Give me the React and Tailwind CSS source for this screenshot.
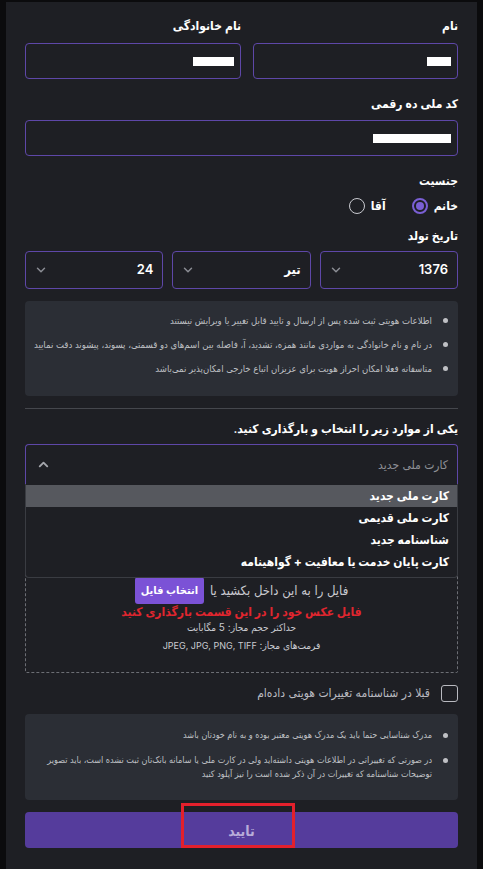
import { ChevronDown, ChevronUp } from "lucide-react";

const FONT = { fontFamily: 'Inter, "DejaVu Sans Condensed", "DejaVu Sans", sans-serif' };

function Label({ children, className = "" }) {
  return <p className={`h-5 text-[12px] font-semibold leading-5 text-white ${className}`}>{children}</p>;
}

function MaskedInput({ maskWidth }) {
  return (
    <div className="flex h-[36px] items-center rounded-[4px] border border-[#5e47a8] px-[6px]">
      <span className="h-[9px] bg-white" style={{ width: maskWidth }} />
    </div>
  );
}

function DateSelect({ value }) {
  return (
    <div className="flex h-[38px] flex-1 items-center justify-between rounded-[4px] border border-[#5e47a8] pl-[8px] pr-[9px]">
      <span className="text-[13px] font-semibold text-white">{value}</span>
      <ChevronDown size={14} strokeWidth={2.5} className="text-[#8b8d94]" />
    </div>
  );
}

function Bullets({ items, className = "" }) {
  return (
    <ul className={`flex flex-col rounded-[4px] bg-[#2b2e35] pl-[8px] pr-[10px] text-[#bfc0c4] ${className}`}>
      {items.map((t) => (
        <li key={t} className="flex gap-[11px]">
          <span className="mt-[5px] h-[5px] w-[5px] shrink-0 rounded-full bg-[#bfc0c4]" />
          <span>{t}</span>
        </li>
      ))}
    </ul>
  );
}

export default function App() {
  const options = ["کارت ملی جدید", "کارت ملی قدیمی", "شناسنامه جدید", "کارت پایان خدمت یا معافیت + گواهینامه"];

  return (
    <div dir="rtl" className="min-h-screen bg-[#0b0b0d] pt-[2px] pr-[6px]" style={FONT}>
      <div className="ml-auto mr-0 min-h-[867px] w-[471px] bg-[#1e1f24] px-[19px] pt-[14px]" dir="rtl">
        <div className="grid grid-cols-[205px_216px] gap-x-[12px]">
          <div>
            <Label>نام</Label>
            <div className="mt-[7px]"><MaskedInput maskWidth={24} /></div>
          </div>
          <div>
            <Label>نام خانوادگی</Label>
            <div className="mt-[7px]"><MaskedInput maskWidth={41} /></div>
          </div>
        </div>

        <Label className="mt-[15px]">کد ملی ده رقمی</Label>
        <div className="mt-[6px]"><MaskedInput maskWidth={78} /></div>

        <Label className="mt-[15px]">جنسیت</Label>
        <div className="mt-[6px] flex items-center gap-[26px]">
          <label className="flex items-center gap-[6px]">
            <span className="text-[12px] font-semibold text-white">خانم</span>
            <span className="flex h-[16px] w-[16px] items-center justify-center rounded-full border-2 border-[#7a5fd4]">
              <span className="h-[8px] w-[8px] rounded-full bg-[#7a5fd4]" />
            </span>
          </label>
          <label className="flex items-center gap-[6px]">
            <span className="text-[12px] font-semibold text-white">آقا</span>
            <span className="h-[16px] w-[16px] rounded-full border border-[#c9cad0]" />
          </label>
        </div>

        <Label className="mt-[11px]">تاریخ تولد</Label>
        <div className="mt-[5px] flex gap-[9px]">
          <DateSelect value="1376" />
          <DateSelect value="تیر" />
          <DateSelect value="24" />
        </div>

        <Bullets
          className="mt-[12px] gap-[9px] pb-[20px] pt-[12px] text-[9.5px] leading-[15px]"
          items={[
            "اطلاعات هویتی ثبت شده پس از ارسال و تایید قابل تغییر یا ویرایش نیستند",
            "در نام و نام خانوادگی به مواردی مانند همزه، تشدید، آ، فاصله بین اسم‌های دو قسمتی، پسوند، پیشوند دقت نمایید",
            "متاسفانه فعلا امکان احراز هویت برای عزیزان اتباع خارجی امکان‌پذیر نمی‌باشد",
          ]}
        />

        <div className="mt-[12px] h-px bg-[#45474d]" />

        <Label className="mt-[10px]">یکی از موارد زیر را انتخاب و بارگذاری کنید.</Label>

        <div className="relative mt-[5px]">
          <div className="flex h-[40px] items-center justify-between rounded-t-[4px] border border-b-0 border-[#5e47a8] pl-[10px] pr-[9px]">
            <span className="text-[12px] text-[#8e9096]">کارت ملی جدید</span>
            <ChevronUp size={15} strokeWidth={3} className="text-[#a4a6ac]" />
          </div>
          <ul className="absolute left-0 right-0 top-[40px] z-10 rounded-b-[4px] border border-t-0 border-[#3a3c42] bg-[#1e1f24] pb-[4px] pt-[1px]">
            {options.map((o, i) => (
              <li
                key={o}
                className={`flex h-[22px] items-center pr-[8px] text-[12px] font-bold text-white ${i === 0 ? "bg-[#56585e]" : ""}`}
              >
                {o}
              </li>
            ))}
          </ul>

          <div className="mt-[8px] flex flex-col items-center rounded-[2px] border border-dashed border-[#6c6e74] pb-[18px] pt-[84px]">
            <div className="flex items-center gap-[6px]">
              <span className="text-[13px] text-[#c9cad0]">فایل را به این داخل بکشید یا</span>
              <span className="rounded-[3px] bg-[#7b52d6] px-[6px] py-[6px] text-[11px] font-bold leading-[15px] text-white">انتخاب فایل</span>
            </div>
            <p className="mt-0 text-[12px] font-bold leading-4 text-[#e0262f]">فایل عکس خود را در این قسمت بارگذاری کنید</p>
            <p className="-mt-[1px] text-[10px] leading-4 text-[#c9cad0]">حداکثر حجم مجاز: 5 مگابایت</p>
            <p className="mt-[2px] text-[10px] leading-4 text-[#c9cad0]">
              فرمت‌های مجاز: <span className="text-[9px]">JPEG, JPG, PNG, TIFF</span>
            </p>
          </div>
        </div>

        <label className="mt-[11px] flex items-center gap-[11px]">
          <span className="h-[17px] w-[17px] rounded-[3px] border border-[#b9bac0]" />
          <span className="text-[12px] text-[#b9bac0]">قبلا در شناسنامه تغییرات هویتی داده‌ام</span>
        </label>

        <Bullets
          className="mt-[12px] gap-[11px] pb-[19px] pt-[14px] text-[9px] leading-[14px]"
          items={[
            "مدرک شناسایی حتما باید یک مدرک هویتی معتبر بوده و به نام خودتان باشد",
            "در صورتی که تغییراتی در اطلاعات هویتی داشته‌اید ولی در کارت ملی یا سامانه بانک‌تان ثبت نشده است، باید تصویر توضیحات شناسنامه که تغییرات در آن ذکر شده است را نیز آپلود کنید",
          ]}
        />

        <div className="relative mt-[12px]">
          <button className="flex h-[36px] w-full items-center justify-center rounded-[4px] bg-[#553c9c] text-[14px] font-bold text-[#b8acd9]">
            تایید
          </button>
          <span className="pointer-events-none absolute -top-[9px] bottom-0 left-[156px] w-[114px] border-[3px] border-[#e3202c]" />
        </div>
      </div>
    </div>
  );
}
